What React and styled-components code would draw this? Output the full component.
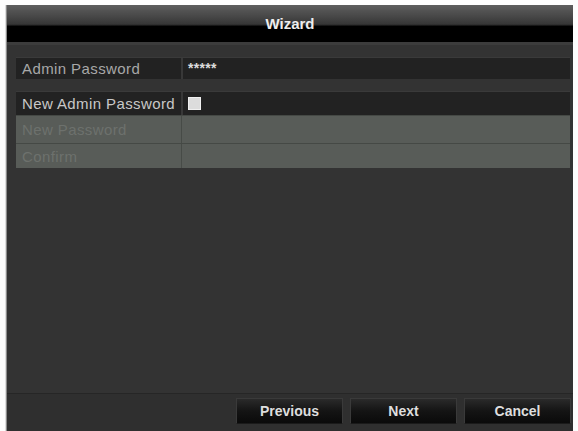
import React from "react";
import styled, { createGlobalStyle } from "styled-components";

const GlobalStyle = createGlobalStyle`
  html, body {
    margin: 0;
    padding: 0;
    background: #fdfdfd;
    font-family: "Liberation Sans", Arial, sans-serif;
  }
  #root {
    height: 431px;
    padding: 5px 5px 0 6px;
    box-sizing: border-box;
  }
`;

function Wizard() {
  return (
    <Window>
      <TitleBar>Wizard</TitleBar>
      <Body>
        <Row>
          <Label>Admin Password</Label>
          <Value>
            <Dots>*****</Dots>
          </Value>
        </Row>
        <Group>
          <Row $h={24}>
            <Label $bright>New Admin Password</Label>
            <Value>
              <Check />
            </Value>
          </Row>
          <Row $h={28} $disabled>
            <Label $disabled>New Password</Label>
            <Value $disabled />
          </Row>
          <Row $h={25} $disabled>
            <Label $disabled>Confirm</Label>
            <Value $disabled />
          </Row>
        </Group>
      </Body>
      <Footer>
        <Button>Previous</Button>
        <Button>Next</Button>
        <Button>Cancel</Button>
      </Footer>
    </Window>
  );
}

const Window = styled.div`
  height: 100%;
  display: flex;
  flex-direction: column;
  background: #333;
  border-left: 1px solid #8a8a8a;
  box-shadow: -1px 0 0 #ddd;
`;

const TitleBar = styled.div`
  height: 40px;
  display: flex;
  align-items: center;
  justify-content: center;
  font-size: 15px;
  font-weight: bold;
  color: #eee;
  padding-bottom: 1px;
  box-sizing: border-box;
  background: linear-gradient(
    #5e5e5e 0%,
    #484848 30%,
    #363636 52%,
    #000 58%,
    #000 100%
  );
  border-bottom: 3px solid #3c3c3c;
`;

const Body = styled.div`
  flex: 1;
  display: flex;
  flex-direction: column;
  gap: 12px;
  padding: 12px 3px 0 9px;
`;

const Group = styled.div`
  display: flex;
  flex-direction: column;
`;

const Row = styled.div`
  height: ${(p) => p.$h || 22}px;
  display: grid;
  grid-template-columns: 165px 1fr;
  gap: ${(p) => (p.$disabled ? "1px" : "2px")};
  background: ${(p) => (p.$disabled ? "#474b47" : "#383838")};
  border-top: 1px solid ${(p) => (p.$disabled ? "#454945" : "#3a3a3a")};
  box-sizing: border-box;
`;

const Label = styled.div`
  display: flex;
  align-items: center;
  padding-left: 6px;
  font-size: 15px;
  letter-spacing: 0.4px;
  white-space: nowrap;
  overflow: hidden;
  color: ${(p) => (p.$disabled ? "#6d716d" : p.$bright ? "#c8c8c8" : "#a8a8a8")};
  background: ${(p) => (p.$disabled ? "#585c58" : "#222")};
`;

const Value = styled.div`
  display: flex;
  align-items: center;
  padding-left: 5px;
  background: ${(p) => (p.$disabled ? "#585c58" : "#222")};
`;

const Dots = styled.span`
  font-size: 14px;
  font-weight: bold;
  color: #ddd;
  letter-spacing: 0.3px;
  margin-top: -2px;
`;

const Check = styled.span`
  width: 13px;
  height: 13px;
  background: #dcdcdc;
  border: 1px solid #f0f0f0;
  box-sizing: border-box;
`;

const Footer = styled.div`
  height: 38px;
  display: flex;
  justify-content: flex-end;
  gap: 7px;
  padding: 4px 2px 0 0;
  box-sizing: border-box;
  background: #2f2f2f;
  border-top: 1px solid #262626;
`;

const Button = styled.div`
  width: 107px;
  height: 26px;
  display: flex;
  align-items: center;
  justify-content: center;
  font-size: 14px;
  font-weight: bold;
  color: #dedede;
  background: linear-gradient(#2a2a2a, #141414 50%, #0a0a0a);
  border: 1px solid #3a3a3a;
  border-bottom-color: #1a1a1a;
  box-sizing: border-box;
`;

export default function App() {
  return (
    <>
      <GlobalStyle />
      <Wizard />
    </>
  );
}
